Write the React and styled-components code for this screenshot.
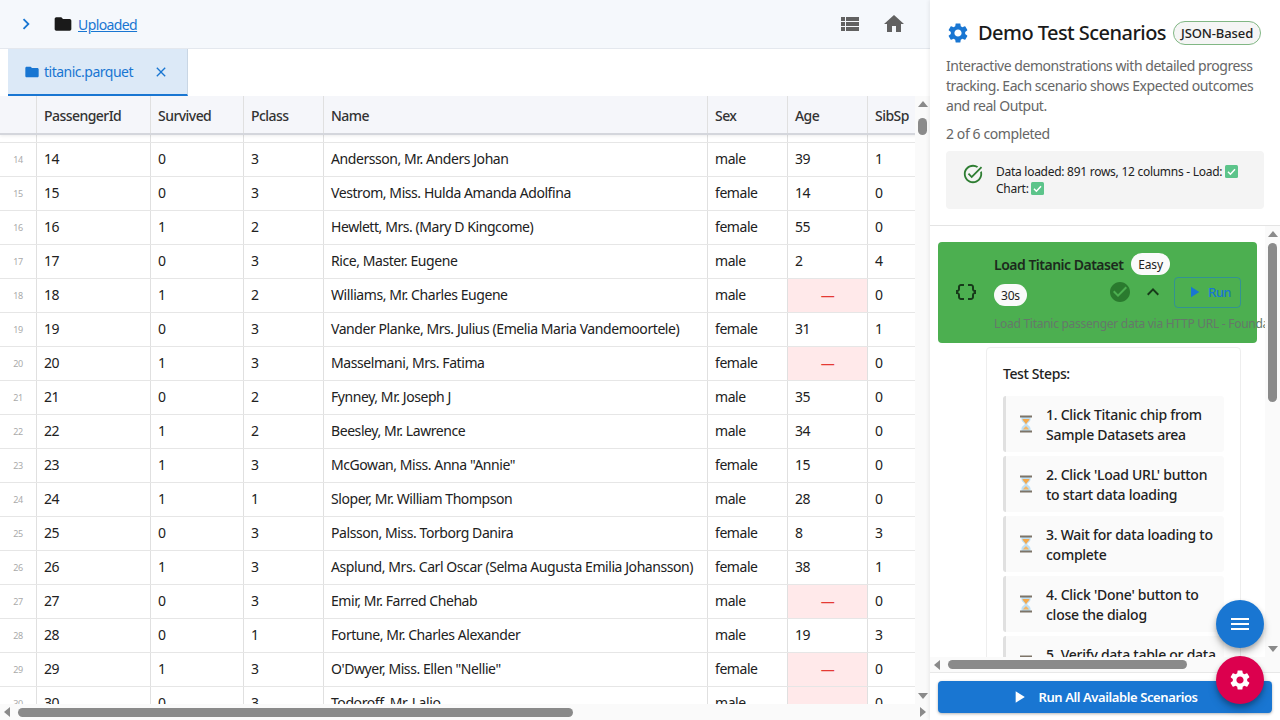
import React from 'react';
import styled, { createGlobalStyle } from 'styled-components';
import {
  MdChevronRight,
  MdFolder,
  MdViewList,
  MdHome,
  MdClose,
  MdSettings,
  MdTaskAlt,
  MdDataObject,
  MdCheckCircle,
  MdExpandLess,
  MdPlayArrow,
  MdMenu,
} from 'react-icons/md';

const rows = [
  [14, 0, 3, 'Andersson, Mr. Anders Johan', 'male', 39, 1],
  [15, 0, 3, 'Vestrom, Miss. Hulda Amanda Adolfina', 'female', 14, 0],
  [16, 1, 2, 'Hewlett, Mrs. (Mary D Kingcome)', 'female', 55, 0],
  [17, 0, 3, 'Rice, Master. Eugene', 'male', 2, 4],
  [18, 1, 2, 'Williams, Mr. Charles Eugene', 'male', null, 0],
  [19, 0, 3, 'Vander Planke, Mrs. Julius (Emelia Maria Vandemoortele)', 'female', 31, 1],
  [20, 1, 3, 'Masselmani, Mrs. Fatima', 'female', null, 0],
  [21, 0, 2, 'Fynney, Mr. Joseph J', 'male', 35, 0],
  [22, 1, 2, 'Beesley, Mr. Lawrence', 'male', 34, 0],
  [23, 1, 3, 'McGowan, Miss. Anna "Annie"', 'female', 15, 0],
  [24, 1, 1, 'Sloper, Mr. William Thompson', 'male', 28, 0],
  [25, 0, 3, 'Palsson, Miss. Torborg Danira', 'female', 8, 3],
  [26, 1, 3, 'Asplund, Mrs. Carl Oscar (Selma Augusta Emilia Johansson)', 'female', 38, 1],
  [27, 0, 3, 'Emir, Mr. Farred Chehab', 'male', null, 0],
  [28, 0, 1, 'Fortune, Mr. Charles Alexander', 'male', 19, 3],
  [29, 1, 3, "O'Dwyer, Miss. Ellen \"Nellie\"", 'female', null, 0],
  [30, 0, 3, 'Todoroff, Mr. Lalio', 'male', null, 0],
];

const columns = ['PassengerId', 'Survived', 'Pclass', 'Name', 'Sex', 'Age', 'SibSp'];

const steps = [
  '1. Click Titanic chip from Sample Datasets area',
  "2. Click 'Load URL' button to start data loading",
  '3. Wait for data loading to complete',
  "4. Click 'Done' button to close the dialog",
  '5. Verify data table or data preview is visible',
];

const GlobalStyle = createGlobalStyle`
  html, body {
    margin: 0;
    height: 100%;
    overflow: hidden;
    background: #fff;
  }
  body {
    font-family: "Noto Sans", "Open Sans", sans-serif;
    font-size: 14px;
    color: #212121;
  }
  * {
    box-sizing: border-box;
  }
`;

const Page = styled.div`
  display: flex;
  width: 1280px;
  height: 720px;
  overflow: hidden;
  position: relative;
`;

const Main = styled.div`
  width: 930px;
  display: flex;
  flex-direction: column;
`;

const TopBar = styled.div`
  height: 49px;
  flex: none;
  display: flex;
  align-items: center;
  padding: 0 24px 0 15px;
  background: #f5f8fc;
  border-bottom: 1px solid #e4e8ee;
`;

const Crumb = styled.a`
  margin-left: 5px;
  color: #1976d2;
  text-decoration: underline;
  letter-spacing: -0.6px;
`;

const TopActions = styled.div`
  margin-left: auto;
  display: flex;
  align-items: center;
  gap: 20px;
  color: #616161;
`;

const TabBar = styled.div`
  height: 47px;
  flex: none;
  padding-left: 8px;
`;

const Tab = styled.div`
  width: 180px;
  height: 47px;
  display: flex;
  align-items: center;
  padding: 0 18px 0 16px;
  background: #dce9f7;
  border-right: 1px solid #c9d6e4;
  border-bottom: 2px solid #1976d2;
  color: #1976d2;
  letter-spacing: -0.5px;
  span {
    margin-left: 4px;
  }
  svg:last-child {
    margin-left: auto;
  }
`;

const TableFrame = styled.div`
  flex: 1;
  min-height: 0;
  display: flex;
`;

const Viewport = styled.div`
  width: 915px;
  overflow: hidden;
`;

const gridColumns = '37px 114px 93px 80px 384px 80px 80px 80px';

const Row = styled.div`
  display: grid;
  grid-template-columns: ${gridColumns};
  width: max-content;
`;

const HeaderRow = styled(Row)`
  height: 39px;
  background: #f5f6fa;
  border-bottom: 2px solid #d4d6dc;
  box-shadow: 0 1px 3px rgba(0, 0, 0, 0.08);
  position: relative;
`;

const HeaderCell = styled.div`
  display: flex;
  align-items: center;
  padding: 2px 0 0 7px;
  font-weight: 500;
  color: #333;
  letter-spacing: -0.55px;
  border-right: 1px solid #e0e0e0;
`;

const PeekRow = styled(Row)`
  height: 8px;
  border-bottom: 1px solid #e6e6e6;
`;

const PeekCell = styled.div`
  border-right: 1px solid #e0e0e0;
`;

const DataRow = styled(Row)`
  height: 34px;
  border-bottom: 1px solid #e6e6e6;
`;

const Cell = styled.div`
  display: flex;
  align-items: center;
  padding: 0 0 2px 7px;
  white-space: nowrap;
  letter-spacing: -0.43px;
  border-right: 1px solid #e0e0e0;
  ${(p) => p.$missing && 'background: #ffe9ea; justify-content: center; padding: 0; color: #e53935;'}
`;

const IndexCell = styled(Cell)`
  justify-content: center;
  padding: 0;
  font-size: 9px;
  color: #aaa;
`;

const VBar = styled.div`
  width: 15px;
  flex: none;
  display: flex;
  flex-direction: column;
  align-items: center;
  background: #fafafa;
`;

const HBar = styled.div`
  height: ${(p) => p.$height || 15}px;
  flex: none;
  display: flex;
  align-items: center;
  background: #fafafa;
`;

const ArrowUp = styled.div`
  flex: none;
  margin: 5px 0;
  border-left: 5px solid transparent;
  border-right: 5px solid transparent;
  border-bottom: 6px solid #8a8a8a;
`;

const ArrowDown = styled.div`
  flex: none;
  margin: auto 0 5px;
  border-left: 5px solid transparent;
  border-right: 5px solid transparent;
  border-top: 6px solid #8a8a8a;
`;

const ArrowLeft = styled.div`
  flex: none;
  margin: 0 4px;
  border-top: 5px solid transparent;
  border-bottom: 5px solid transparent;
  border-right: 6px solid #8a8a8a;
`;

const ArrowRight = styled.div`
  flex: none;
  margin: 0 4px 0 auto;
  border-top: 5px solid transparent;
  border-bottom: 5px solid transparent;
  border-left: 6px solid #8a8a8a;
`;

const VThumb = styled.div`
  width: 9px;
  flex: none;
  height: ${(p) => p.$size}px;
  margin-top: ${(p) => p.$offset}px;
  border-radius: 5px;
  background: #8a8a8a;
`;

const HThumb = styled.div`
  height: 9px;
  flex: none;
  width: ${(p) => p.$size}px;
  margin-left: ${(p) => p.$offset}px;
  border-radius: 5px;
  background: #8a8a8a;
`;

const Panel = styled.div`
  width: 350px;
  flex: none;
  display: flex;
  flex-direction: column;
  background: #fff;
  box-shadow: -1px 0 4px rgba(0, 0, 0, 0.08);
  position: relative;
`;

const PanelHead = styled.div`
  flex: none;
  height: 226px;
  padding: 20px 16px 0;
  border-bottom: 1px solid #e4e4e4;
`;

const TitleRow = styled.div`
  display: flex;
  align-items: center;
  height: 26px;
  color: #1976d2;
`;

const Title = styled.h1`
  margin: 0 7px 0 8px;
  font-size: 20px;
  font-weight: 500;
  line-height: 26px;
  letter-spacing: -0.55px;
  color: #1a1a1a;
  white-space: nowrap;
`;

const JsonChip = styled.span`
  height: 24px;
  padding: 0 7px;
  display: inline-flex;
  align-items: center;
  border: 1px solid #81b784;
  border-radius: 12px;
  background: #f5f5f5;
  color: #222;
  font-size: 13px;
  font-weight: 500;
  letter-spacing: -0.1px;
  white-space: nowrap;
`;

const Description = styled.p`
  margin: 10px 0 0;
  line-height: 20px;
  color: #666;
  letter-spacing: -0.45px;
`;

const Progress = styled.div`
  margin-top: 8px;
  line-height: 20px;
  color: #666;
  letter-spacing: -0.4px;
`;

const Alert = styled.div`
  margin-top: 7px;
  width: 318px;
  height: 58px;
  padding: 12px 16px;
  display: flex;
  align-items: flex-start;
  background: #f4f4f4;
  border-radius: 4px;
  color: #2e7d32;
`;

const AlertText = styled.div`
  margin-left: 12px;
  font-size: 12px;
  line-height: 17px;
  color: #222;
  letter-spacing: -0.27px;
`;

const ScrollBox = styled.div`
  flex: 1;
  min-height: 0;
  display: flex;
`;

const ScrollContent = styled.div`
  flex: 1;
  min-width: 0;
  padding: 16px 8px 0;
  overflow: hidden;
`;

const Card = styled.div`
  width: 319px;
  height: 101px;
  padding: 11px 0 0 16px;
  display: flex;
  background: #4caf50;
  border-radius: 4px;
`;

const CardIcon = styled.div`
  flex: none;
  width: 40px;
  margin-top: 27px;
  color: #173a1a;
`;

const CardBody = styled.div`
  width: 247px;
  white-space: nowrap;
`;

const CardLine = styled.div`
  display: flex;
  align-items: center;
  height: 22px;
`;

const CardTitle = styled.span`
  font-weight: 600;
  color: #1c2a1d;
  letter-spacing: -0.5px;
  margin-right: 8px;
`;

const WhiteChip = styled.span`
  display: inline-flex;
  align-items: center;
  height: 22px;
  padding: 0 7px;
  border-radius: 11px;
  background: #fafafa;
  color: #222;
  font-size: 12px;
  letter-spacing: -0.2px;
`;

const ActionLine = styled(CardLine)`
  margin-top: 9px;
`;

const Actions = styled.div`
  margin-left: auto;
  margin-top: -6px;
  display: flex;
  align-items: center;
  color: #173a1a;
`;

const Done = styled.span`
  display: flex;
  color: #2a7a2e;
  margin-right: 9px;
`;

const RunButton = styled.div`
  width: 67px;
  height: 31px;
  margin-left: 9px;
  padding-left: 10px;
  display: flex;
  align-items: center;
  border: 1px solid rgba(25, 118, 210, 0.5);
  border-radius: 4px;
  color: #1976d2;
  font-size: 13px;
  font-weight: 500;
  span {
    margin-left: 5px;
    letter-spacing: -0.5px;
  }
`;

const CardText = styled.div`
  margin-top: 9px;
  font-size: 12px;
  line-height: 17px;
  color: #65786a;
  letter-spacing: -0.27px;
`;

const StepsBox = styled.div`
  width: 255px;
  margin: 4px 0 0 48px;
  padding: 16px 16px 0;
  border: 1px solid #eeeeee;
  border-radius: 4px;
`;

const StepsTitle = styled.div`
  font-weight: 500;
  line-height: 20px;
  color: #222;
  letter-spacing: -0.4px;
  margin-bottom: 12px;
`;

const Step = styled.div`
  display: flex;
  align-items: center;
  height: 56px;
  margin-bottom: 4px;
  padding: 0 8px 0 13px;
  background: #fafafa;
  border-left: 3px solid #e0e0e0;
  border-radius: 3px;
`;

const StepText = styled.div`
  margin-left: 13px;
  padding-top: 2px;
  font-weight: 500;
  line-height: 20px;
  color: #222;
  letter-spacing: -0.26px;
`;

const PanelFoot = styled.div`
  flex: none;
  height: 48px;
  padding: 8px 8px 0;
  border-top: 1px solid #e8e8e8;
`;

const RunAll = styled.div`
  height: 32px;
  padding-right: 3px;
  display: flex;
  align-items: center;
  justify-content: center;
  gap: 9px;
  background: #1976d2;
  border-radius: 4px;
  color: #fff;
  font-size: 13px;
  font-weight: 600;
  letter-spacing: -0.4px;
  box-shadow: 0 1px 3px rgba(0, 0, 0, 0.3);
`;

const Fab = styled.div`
  position: absolute;
  right: 16px;
  top: ${(p) => p.$top}px;
  width: 48px;
  height: 48px;
  display: flex;
  align-items: center;
  justify-content: center;
  border-radius: 50%;
  color: #fff;
  background: ${(p) => p.$bg};
  box-shadow: 0 3px 5px rgba(0, 0, 0, 0.25), 0 6px 10px rgba(0, 0, 0, 0.14);
`;

const CheckEmoji = ({ size = 13 }) => (
  <svg width={size} height={size} viewBox="0 0 13 13" style={{ verticalAlign: '-2px' }}>
    <rect width="13" height="13" rx="1.5" fill="#5cc48a" />
    <path d="M3 6.8l2.4 2.400L10 4.200" fill="none" stroke="#fff" strokeWidth="1.5" />
  </svg>
);

const Hourglass = () => (
  <svg width="14" height="18" viewBox="0 0 14 18" style={{ flex: 'none' }}>
    <path d="M2.500 2h9v2.500c0 2-2.600 3.400-3.400 4.500.8 1.100 3.400 2.500 3.400 4.500V16h-9v-2.500c0-2 2.600-3.400 3.400-4.500-.8-1.100-3.400-2.500-3.400-4.500z" fill="#bfe0f5" />
    <path d="M3.400 4h7.200C10 6.300 7.700 7.500 7 9.500c-.7-2-3-3.200-3.600-5.500z" fill="#f4a94e" />
    <path d="M7 11c-.5 1-2.500 2-3 3.500h6c-.5-1.500-2.500-2.500-3-3.500z" fill="#f4b565" />
    <rect x="1" y="0.500" width="12" height="2" fill="#7d7468" />
    <rect x="1" y="15.500" width="12" height="2" fill="#7d7468" />
  </svg>
);

const App = () => (
  <Page>
    <GlobalStyle />
    <Main>
      <TopBar>
        <MdChevronRight size={22} color="#1976d2" />
        <MdFolder size={20} color="#1a1a1a" style={{ marginLeft: 16 }} />
        <Crumb>Uploaded</Crumb>
        <TopActions>
          <MdViewList size={24} />
          <MdHome size={24} />
        </TopActions>
      </TopBar>
      <TabBar>
        <Tab>
          <MdFolder size={16} />
          <span>titanic.parquet</span>
          <MdClose size={16} />
        </Tab>
      </TabBar>
      <TableFrame>
        <Viewport>
          <HeaderRow>
            <HeaderCell />
            {columns.map((c) => (
              <HeaderCell key={c}>{c}</HeaderCell>
            ))}
          </HeaderRow>
          <PeekRow>
            {['i', ...columns].map((c) => (
              <PeekCell key={c} />
            ))}
          </PeekRow>
          {rows.map((r) => (
            <DataRow key={r[0]}>
              <IndexCell>{r[0]}</IndexCell>
              {r.map((v, i) =>
                v === null ? (
                  <Cell key={i} $missing>—</Cell>
                ) : (
                  <Cell key={i}>{v}</Cell>
                ),
              )}
            </DataRow>
          ))}
        </Viewport>
        <VBar>
          <ArrowUp />
          <VThumb $size={17} $offset={6} />
          <ArrowDown />
        </VBar>
      </TableFrame>
      <HBar $height={16}>
        <ArrowLeft />
        <HThumb $size={555} $offset={4} />
        <ArrowRight />
      </HBar>
    </Main>

    <Panel>
      <PanelHead>
        <TitleRow>
          <MdSettings size={24} />
          <Title>Demo Test Scenarios</Title>
          <JsonChip>JSON-Based</JsonChip>
        </TitleRow>
        <Description>
          Interactive demonstrations with detailed progress tracking. Each scenario shows Expected
          outcomes and real Output.
        </Description>
        <Progress>2 of 6 completed</Progress>
        <Alert>
          <MdTaskAlt size={22} style={{ flex: 'none' }} />
          <AlertText>
            Data loaded: 891 rows, 12 columns - Load: <CheckEmoji /> Chart: <CheckEmoji />
          </AlertText>
        </Alert>
      </PanelHead>

      <ScrollBox>
        <ScrollContent>
          <Card>
            <CardIcon>
              <MdDataObject size={24} />
            </CardIcon>
            <CardBody>
              <CardLine>
                <CardTitle>Load Titanic Dataset</CardTitle>
                <WhiteChip>Easy</WhiteChip>
              </CardLine>
              <ActionLine>
                <WhiteChip>30s</WhiteChip>
                <Actions>
                  <Done>
                    <MdCheckCircle size={24} />
                  </Done>
                  <MdExpandLess size={24} />
                  <RunButton>
                    <MdPlayArrow size={18} />
                    <span>Run</span>
                  </RunButton>
                </Actions>
              </ActionLine>
              <CardText>Load Titanic passenger data via HTTP URL - Foundation for all other scenarios</CardText>
            </CardBody>
          </Card>
          <StepsBox>
            <StepsTitle>Test Steps:</StepsTitle>
            {steps.map((s) => (
              <Step key={s}>
                <Hourglass />
                <StepText>{s}</StepText>
              </Step>
            ))}
          </StepsBox>
        </ScrollContent>
        <VBar>
          <ArrowUp />
          <VThumb $size={159} $offset={1} />
          <ArrowDown />
        </VBar>
      </ScrollBox>
      <HBar>
        <ArrowLeft />
        <HThumb $size={239} $offset={4} />
      </HBar>
      <PanelFoot>
        <RunAll>
          <MdPlayArrow size={20} />
          Run All Available Scenarios
        </RunAll>
      </PanelFoot>
      <Fab $top={600} $bg="#1976d2">
        <MdMenu size={24} />
      </Fab>
      <Fab $top={656} $bg="#dc004e">
        <MdSettings size={24} />
      </Fab>
    </Panel>
  </Page>
);

export default App;
